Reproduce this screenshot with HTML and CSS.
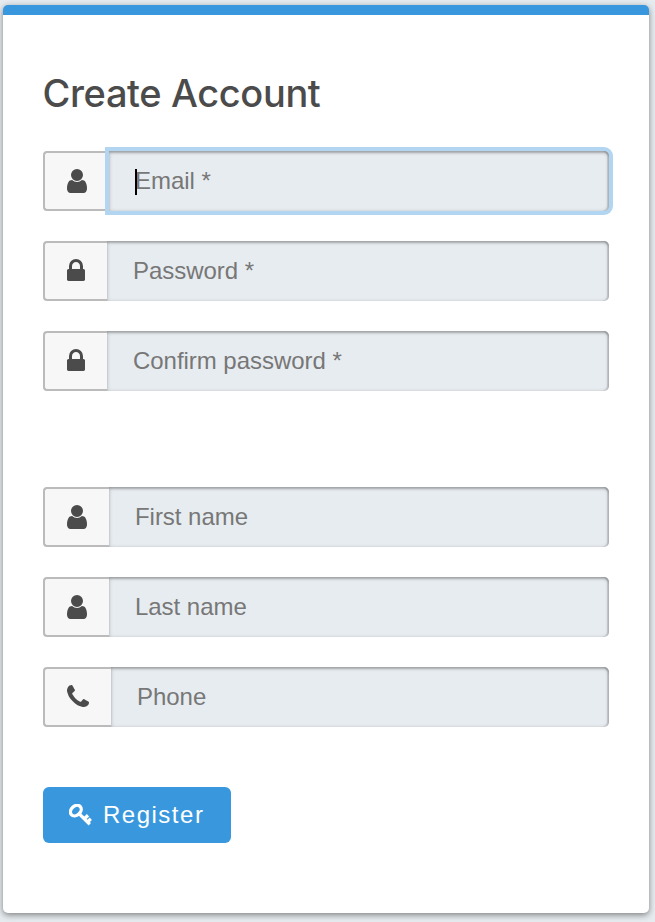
FILE: index.html
```html
<!DOCTYPE html>
<html lang="en">
<head>
<meta charset="utf-8">
<title>Create Account</title>
<link rel="stylesheet" href="styles.css">
</head>
<body>
<svg class="sprite" aria-hidden="true">
  <symbol id="user" viewBox="256 0 1280 1792"><path d="M1536 1399q0 109-62.5 187t-150.5 78h-854q-88 0-150.5-78t-62.5-187q0-85 8.5-160.5t31.5-152 58.5-131 94-89 134.5-34.5q131 128 313 128t313-128q76 0 134.5 34.5t94 89 58.5 131 31.5 152 8.5 160.5zm-256-887q0 159-112.5 271.5t-271.5 112.5-271.5-112.5-112.5-271.5 112.5-271.5 271.5-112.5 271.5 112.5 112.5 271.5z"/></symbol>
  <symbol id="lock" viewBox="320 0 1152 1792"><path d="M640 768h512v-192q0-106-75-181t-181-75-181 75-75 181v192zm832 96v576q0 40-28 68t-68 28h-960q-40 0-68-28t-28-68v-576q0-40 28-68t68-28h32v-192q0-184 132-316t316-132 316 132 132 316v192h32q40 0 68 28t28 68z"/></symbol>
  <symbol id="phone" viewBox="192 0 1408 1792"><path d="M1600 1240q0 27-10 70.5t-21 68.5q-21 50-122 106-94 51-186 51-27 0-53-3.5t-57.5-12.5-47-14.5-55.5-20.5-49-18q-98-35-175-83-127-79-264-216t-216-264q-48-77-83-175-3-9-18-49t-20.5-55.5-14.5-47-12.5-57.5-3.5-53q0-92 51-186 56-101 106-122 25-11 68.5-21t70.5-10q14 0 21 3 18 6 53 76 11 19 30 54t35 63.5 31 53.5q3 4 17.5 25t21.5 35.5 7 28.5q0 20-28.5 50t-62 55-62 53-28.5 46q0 9 5 22.5t8.5 20.5 14 24 11.5 19q76 137 174 235t235 174q2 1 19 11.5t24 14 20.5 8.5 22.5 5q18 0 46-28.5t53-62 55-62 50-28.5q14 0 28.5 7t35.5 21.5 25 17.5q25 15 53.5 31t63.5 35 54 30q70 35 76 53 3 7 3 21z"/></symbol>
</svg>
<form class="card">
  <h1 class="title">Create Account</h1>
  <div class="group">
    <label class="field"><span class="addon"><svg class="icon icon-user"><use href="#user"/></svg></span><span class="input focused"><span class="caret"></span>Email *</span></label>
    <label class="field"><span class="addon"><svg class="icon icon-lock"><use href="#lock"/></svg></span><span class="input">Password *</span></label>
    <label class="field"><span class="addon"><svg class="icon icon-lock"><use href="#lock"/></svg></span><span class="input">Confirm password *</span></label>
  </div>
  <div class="group">
    <label class="field"><span class="addon"><svg class="icon icon-user"><use href="#user"/></svg></span><span class="input">First name</span></label>
    <label class="field"><span class="addon"><svg class="icon icon-user"><use href="#user"/></svg></span><span class="input">Last name</span></label>
    <label class="field"><span class="addon"><svg class="icon icon-phone"><use href="#phone"/></svg></span><span class="input">Phone</span></label>
  </div>
  <button class="register" type="button"><svg class="icon-key" viewBox="0 0 23 22"><ellipse cx="6.8" cy="6.6" rx="6" ry="4.6" transform="rotate(-42 6.8 6.6)"/><path d="M10 9.6L20.8 20.2M15.2 15l3.8-3.7M18.4 18.1l3.4-3.3"/></svg>Register</button>
</form>
</body>
</html>
```

FILE: styles.css
```css
* { box-sizing: border-box; }
body {
  margin: 0;
  padding: 5px 6px 9px 3px;
  background: #e6ebef;
  font-family: "Liberation Sans", Arial, sans-serif;
}
.sprite { display: none; }
.card {
  height: 908px;
  padding: 53px 40px 0;
  border-top: 10px solid #3998dd;
  border-radius: 5px;
  background: #fff;
  box-shadow: 0 2px 6px rgba(0, 0, 0, 0.45);
}
.title {
  margin: 0 0 33px -0.5px;
  font: 500 38px/50px Inter, sans-serif;
  letter-spacing: -0.38px;
  color: #4b4b4b;
  white-space: nowrap;
}
.group {
  display: flex;
  flex-direction: column;
  gap: 30px;
  margin-bottom: 96px;
}
.group + .group { margin-bottom: 60px; }
.field {
  display: flex;
  height: 60px;
}
.addon {
  display: flex;
  align-items: center;
  padding: 0 22px;
  border: 2px solid #bbb;
  border-right: 0;
  border-radius: 4px 0 0 4px;
  background: #f7f7f7;
}
.icon {
  display: block;
  height: 28px;
  fill: #4b4b4b;
}
.icon-user { width: 20px; }
.icon-lock { width: 18px; }
.icon-phone { width: 22px; }
.input {
  --inner: inset -2px 0 1px rgba(0, 0, 0, 0.13), inset 0 2px 2px rgba(0, 0, 0, 0.19), inset 0 1px 4px rgba(0, 0, 0, 0.2);
  position: relative;
  flex: 1;
  padding-left: 26px;
  border-radius: 0 5px 5px 0;
  background: #e7ecf0;
  box-shadow: var(--inner);
  font-size: 24px;
  line-height: 60px;
  letter-spacing: -0.04px;
  color: #777;
}
.focused { box-shadow: 0 0 0 4px #b2d6f1, var(--inner); }
.caret {
  position: absolute;
  left: 26px;
  top: 18px;
  width: 2px;
  height: 26px;
  background: #000;
}
.register {
  display: flex;
  align-items: center;
  gap: 11px;
  width: 188px;
  height: 56px;
  padding: 0 0 0 26px;
  border: 0;
  border-radius: 6px;
  background: #3998dd;
  color: #fff;
  font: 24px/56px "Liberation Sans", Arial, sans-serif;
  letter-spacing: 1.5px;
}
.icon-key {
  width: 23px;
  height: 22px;
  fill: none;
  stroke: #fff;
  stroke-width: 3.3;
}
```
